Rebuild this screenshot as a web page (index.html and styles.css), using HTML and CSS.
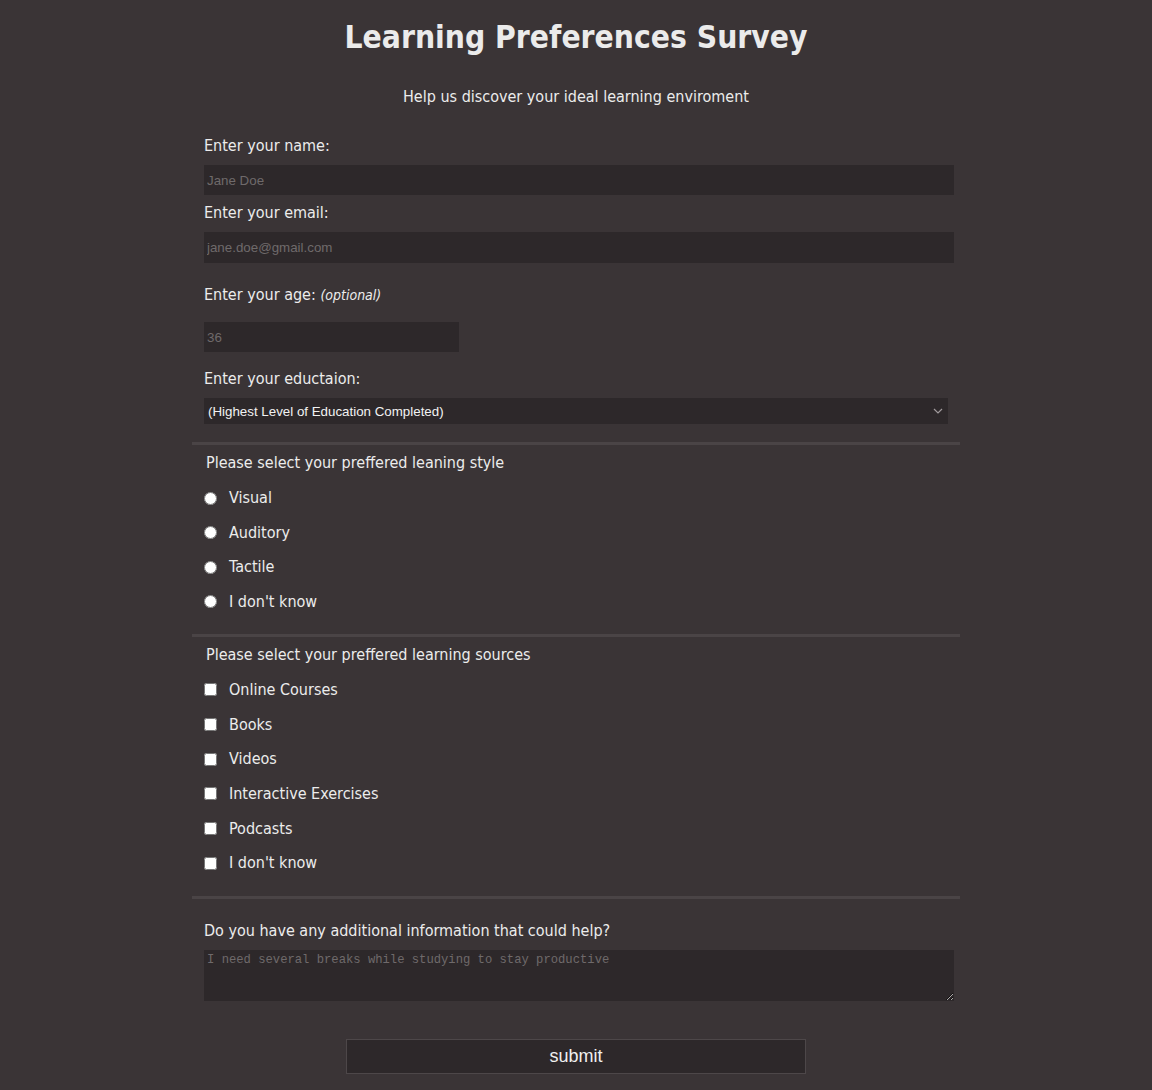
FILE: index.html
```html
<!DOCTYPE html>
<html lang="en">
<head>
<meta charset="utf-8">
<title>Learning Preferences Survey</title>
<link rel="stylesheet" href="styles.css">
</head>
<body>
<h1 class="title">Learning Preferences Survey</h1>
<p class="subtitle">Help us discover your ideal learning enviroment</p>
<form class="survey">
  <div class="basics">
    <label class="lbl" for="name">Enter your name:</label>
    <input class="field" id="name" type="text" placeholder="Jane Doe">
    <label class="lbl lbl-email" for="email">Enter your email:</label>
    <input class="field field-email" id="email" type="email" placeholder="jane.doe@gmail.com">
    <label class="lbl lbl-age" for="age">Enter your age: <em class="opt">(optional)</em></label>
    <input class="field field-age" id="age" type="number" placeholder="36">
    <label class="lbl lbl-edu" for="edu">Enter your eductaion:</label>
    <select class="select" id="edu">
      <option>(Highest Level of Education Completed)</option>
    </select>
  </div>
  <div class="rule"></div>
  <div class="group">
    <p class="group-title">Please select your preffered leaning style</p>
    <div class="opts">
      <label class="opt-row"><input type="radio" name="style" class="ctl"><span>Visual</span></label>
      <label class="opt-row"><input type="radio" name="style" class="ctl"><span>Auditory</span></label>
      <label class="opt-row"><input type="radio" name="style" class="ctl"><span>Tactile</span></label>
      <label class="opt-row"><input type="radio" name="style" class="ctl"><span>I don't know</span></label>
    </div>
  </div>
  <div class="rule"></div>
  <div class="group group-last">
    <p class="group-title">Please select your preffered learning sources</p>
    <div class="opts">
      <label class="opt-row"><input type="checkbox" class="ctl box"><span>Online Courses</span></label>
      <label class="opt-row"><input type="checkbox" class="ctl box"><span>Books</span></label>
      <label class="opt-row"><input type="checkbox" class="ctl box"><span>Videos</span></label>
      <label class="opt-row"><input type="checkbox" class="ctl box"><span>Interactive Exercises</span></label>
      <label class="opt-row"><input type="checkbox" class="ctl box"><span>Podcasts</span></label>
      <label class="opt-row"><input type="checkbox" class="ctl box"><span>I don't know</span></label>
    </div>
  </div>
  <div class="rule"></div>
  <div class="extra">
    <label class="lbl" for="info">Do you have any additional information that could help?</label>
    <textarea class="area" id="info" placeholder="I need several breaks while studying to stay productive"></textarea>
  </div>
  <div class="actions">
    <button type="submit" class="submit">submit</button>
  </div>
</form>
</body>
</html>
```
FILE: styles.css
```css
html, body {
  margin: 0;
  padding: 0;
}
body {
  background: #3a3436;
  color: #ececec;
  font-family: "DejaVu Sans Condensed", "DejaVu Sans", sans-serif;
  font-size: 16px;
  min-height: 1090px;
}
.title {
  margin: 18px 0 0;
  text-align: center;
  font-size: 31.5px;
  line-height: 38px;
  font-weight: bold;
  color: #ebebeb;
}
.subtitle {
  margin: 31px 0 0;
  text-align: center;
  line-height: 20px;
}
.survey {
  width: 768px;
  margin: 29px auto 0;
  display: flex;
  flex-direction: column;
}
.basics {
  display: flex;
  flex-direction: column;
  align-items: flex-start;
  padding: 0 6px 0 12px;
}
.lbl {
  display: block;
  line-height: 20px;
}
.opt {
  font-size: 14px;
}
.field {
  box-sizing: border-box;
  width: 750px;
  height: 30px;
  margin-top: 9px;
  border: none;
  outline: none;
  background: #2d282a;
  color: #ddd;
  padding: 0 3px;
  font-family: "Liberation Sans", Arial, sans-serif;
  font-size: 13.33px;
}
.field::placeholder {
  color: #6f6a6b;
}
.lbl-email { margin-top: 8px; }
.field-email { height: 31px; }
.lbl-age { margin-top: 22px; }
.field-age {
  width: 255px;
  margin-top: 17px;
  -moz-appearance: textfield;
}
.field-age::-webkit-inner-spin-button,
.field-age::-webkit-outer-spin-button {
  -webkit-appearance: none;
  margin: 0;
}
.lbl-edu { margin-top: 17px; }
.select {
  box-sizing: border-box;
  width: 744px;
  height: 26px;
  margin-top: 9px;
  border: none;
  outline: none;
  -webkit-appearance: none;
  appearance: none;
  background-color: #2d282a;
  background-image: url("data:image/svg+xml,%3Csvg xmlns='http://www.w3.org/2000/svg' width='10' height='6' viewBox='0 0 10 6'%3E%3Cpath d='M1 1l4 4 4-4' fill='none' stroke='%23a09a9c' stroke-width='1.2'/%3E%3C/svg%3E");
  background-repeat: no-repeat;
  background-position: right 5px center;
  color: #f2f2f2;
  padding: 0 4px;
  font-family: "Liberation Sans", Arial, sans-serif;
  font-size: 13.33px;
}
.rule {
  height: 3px;
  background: #4a4446;
  margin-top: 18px;
}
.group {
  padding: 0 12px 4px;
}
.group-last {
  padding-bottom: 5px;
}
.group-title {
  margin: 8px 0 0 2px;
  line-height: 20px;
}
.opts {
  display: flex;
  flex-direction: column;
  gap: 14.67px;
  margin-top: 15px;
}
.opt-row {
  display: flex;
  align-items: center;
  gap: 12px;
  height: 20px;
  line-height: 20px;
}
.ctl {
  margin: 0;
  width: 13px;
  height: 13px;
  flex: none;
}
.extra {
  padding: 0 6px 0 12px;
  margin-top: 22px;
  display: flex;
  flex-direction: column;
  align-items: flex-start;
}
.area {
  box-sizing: border-box;
  width: 750px;
  height: 51px;
  margin-top: 9px;
  border: none;
  outline: none;
  background: #2d282a;
  color: #ddd;
  padding: 3px 3px;
  font-family: "Liberation Mono", monospace;
  font-size: 12.2px;
}
.area::placeholder {
  color: #6f6a6b;
}
.actions {
  display: flex;
  justify-content: center;
  margin-top: 38px;
}
.submit {
  box-sizing: border-box;
  width: 460px;
  height: 35px;
  background: #2d282a;
  border: 1px solid #4d4749;
  color: #f0f0f0;
  font-family: "Liberation Sans", Arial, sans-serif;
  font-size: 18px;
  padding: 0;
}
```
